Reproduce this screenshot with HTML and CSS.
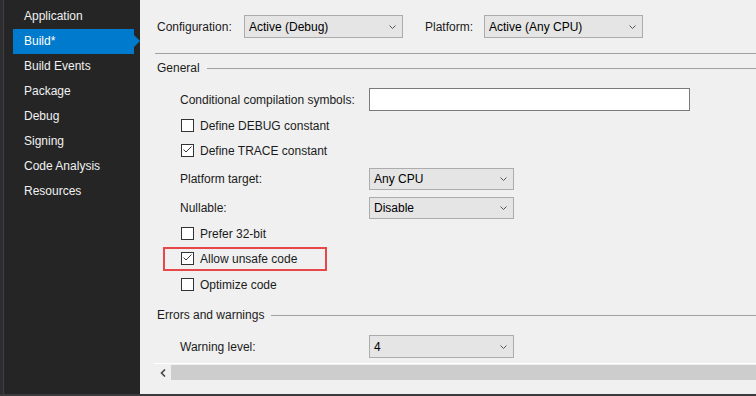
FILE: index.html
```html
<!DOCTYPE html>
<html lang="en">

<head>
    <meta charset="UTF-8">
    <title>Build</title>
    <link rel="stylesheet" href="styles.css">
</head>

<body>
    <div class="window">
        <nav class="sidebar">
            <ul class="tabs">
                <li>Application</li>
                <li class="active">Build*</li>
                <li>Build Events</li>
                <li>Package</li>
                <li>Debug</li>
                <li>Signing</li>
                <li>Code Analysis</li>
                <li>Resources</li>
            </ul>
        </nav>

        <main class="page">
            <div class="toolbar">
                <span class="tb-label cfg">Configuration:</span>
                <div class="combo top">
                    <span>Active (Debug)</span>
                    <svg width="7" height="4" viewBox="0 0 7 4"><polyline points="0.5,0.5 3.5,3.5 6.5,0.5" /></svg>
                </div>
                <span class="tb-label plat">Platform:</span>
                <div class="combo top">
                    <span>Active (Any CPU)</span>
                    <svg width="7" height="4" viewBox="0 0 7 4"><polyline points="0.5,0.5 3.5,3.5 6.5,0.5" /></svg>
                </div>
            </div>

            <div class="divider"></div>

            <div class="section-head"><span>General</span><i class="rule"></i></div>

            <div class="row r-cond">
                <span class="field-label">Conditional compilation symbols:</span>
                <div class="textbox"></div>
            </div>
            <div class="row r-tight">
                <span class="box"></span>Define DEBUG constant
            </div>
            <div class="row">
                <span class="box">
                    <svg width="11" height="11" viewBox="0 0 11 11"><polyline points="1.5,4.5 4,7 9.5,1.5" /></svg>
                </span>Define TRACE constant
            </div>
            <div class="row r-sel">
                <span class="field-label">Platform target:</span>
                <div class="combo small">
                    <span>Any CPU</span>
                    <svg width="7" height="4" viewBox="0 0 7 4"><polyline points="0.5,0.5 3.5,3.5 6.5,0.5" /></svg>
                </div>
            </div>
            <div class="row r-sel2">
                <span class="field-label">Nullable:</span>
                <div class="combo small">
                    <span>Disable</span>
                    <svg width="7" height="4" viewBox="0 0 7 4"><polyline points="0.5,0.5 3.5,3.5 6.5,0.5" /></svg>
                </div>
            </div>
            <div class="row r-tight">
                <span class="box"></span>Prefer 32-bit
            </div>
            <div class="row highlighted">
                <span class="box">
                    <svg width="11" height="11" viewBox="0 0 11 11"><polyline points="1.5,4.5 4,7 9.5,1.5" /></svg>
                </span>Allow unsafe code
                <div class="mark"></div>
            </div>
            <div class="row r-tight">
                <span class="box"></span>Optimize code
            </div>

            <div class="section-head errors"><span>Errors and warnings</span><i class="rule"></i></div>

            <div class="row r-warn">
                <span class="field-label">Warning level:</span>
                <div class="combo small tall">
                    <span>4</span>
                    <svg width="7" height="4" viewBox="0 0 7 4"><polyline points="0.5,0.5 3.5,3.5 6.5,0.5" /></svg>
                </div>
            </div>

            <div class="hscroll">
                <div class="arrow">
                    <svg width="6" height="8" viewBox="0 0 6 8"><polyline points="5,0.5 1.5,4 5,7.5" /></svg>
                </div>
                <div class="thumb"></div>
            </div>
        </main>
    </div>
</body>

</html>
```

FILE: styles.css
```css
body {
    margin: 0;
    padding: 0;
    background-color: #3a3a3d;
    font-family: "Liberation Sans", Arial, sans-serif;
    font-size: 12px;
    overflow: hidden;
}

.window {
    display: flex;
    height: 394px;
    width: 756px;
}

/* left tab list */
.sidebar {
    width: 140px;
    flex-shrink: 0;
    background: linear-gradient(to right, #2d2d30 0 3px, #3f3f46 3px 4px, #252526 4px);
}

.tabs {
    list-style: none;
    margin: 0;
    padding: 4px 0 0 13px;
}

.tabs li {
    position: relative;
    width: 110px;
    padding-left: 11px;
    line-height: 25px;
    height: 25px;
    color: #f1f1f1;
}

.tabs li.active {
    background-color: #007acc;
    color: #fff;
}

.tabs li.active::after {
    content: "";
    position: absolute;
    right: -6px;
    top: 6px;
    border-top: 6px solid transparent;
    border-bottom: 6px solid transparent;
    border-left: 6px solid #007acc;
}

/* property page */
.page {
    flex: 1;
    background-color: #f0f0f0;
    color: #1b1b1b;
    display: flex;
    flex-direction: column;
}

.toolbar {
    display: flex;
    align-items: center;
    padding: 15px 0 0 17px;
    height: 23px;
}

.tb-label.cfg {
    width: 87px;
}

.tb-label.plat {
    margin-left: 22px;
    width: 59px;
}

.combo {
    display: flex;
    align-items: center;
    justify-content: space-between;
    box-sizing: border-box;
    background-color: #e5e5e5;
    border: 1px solid #acacac;
    padding: 0 6px 0 4px;
    color: #000;
}

.combo svg polyline,
.arrow svg polyline {
    fill: none;
    stroke: #555;
    stroke-width: 1;
}

.combo.top {
    width: 159px;
    height: 23px;
}

.combo.small {
    width: 145px;
    height: 22px;
}

.combo.tall {
    height: 23px;
}

.divider {
    margin: 15px 0 0 15px;
    height: 1px;
    background-color: #a0a0a0;
}

.section-head {
    display: flex;
    align-items: center;
    height: 16px;
    margin-top: 6px;
    padding-left: 17px;
}

.section-head .rule {
    flex: 1;
    height: 1px;
    margin-left: 7px;
    background-color: #a0a0a0;
}

.section-head.errors {
    margin-top: 10px;
}

.row {
    position: relative;
    display: flex;
    align-items: center;
    height: 25px;
    padding-left: 40px;
}

.r-cond {
    margin-top: 11px;
}

.r-tight {
    margin-top: 1px;
}

.r-sel {
    margin-top: 3px;
}

.r-sel2 {
    margin-top: 4px;
}

.r-warn {
    margin-top: 11px;
}

.field-label {
    width: 189px;
}

.textbox {
    box-sizing: border-box;
    width: 321px;
    height: 23px;
    background-color: #fff;
    border: 1px solid #7a7a7a;
}

.box {
    box-sizing: border-box;
    width: 13px;
    height: 13px;
    margin: 0 6px 0 1px;
    background-color: #fff;
    border: 1px solid #333;
    display: flex;
}

.box svg polyline {
    fill: none;
    stroke: #3a3a3a;
    stroke-width: 1;
}

/* red annotation box drawn over the row */
.mark {
    position: absolute;
    left: 23px;
    top: 1px;
    width: 164px;
    height: 24px;
    box-sizing: border-box;
    border: 2px solid #e8474a;
}

.hscroll {
    margin: 4px 0 0 14px;
    border-top: 1px solid #fff;
    height: 17px;
    display: flex;
}

.hscroll .arrow {
    width: 17px;
    display: flex;
    align-items: center;
    justify-content: center;
}

.hscroll .arrow svg polyline {
    stroke: #444;
    stroke-width: 1.6;
}

.hscroll .thumb {
    flex: 1;
    margin: 1px 0;
    background-color: #cdcdcd;
}
```
